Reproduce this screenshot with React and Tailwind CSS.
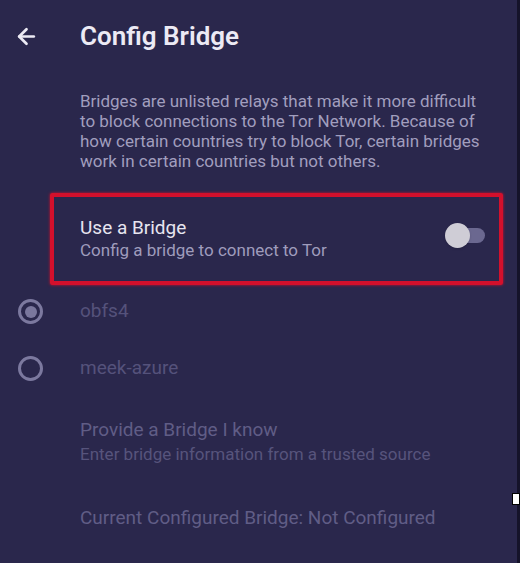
import { ArrowLeft } from 'lucide-react';

function Radio({ checked, label }) {
  return (
    <div className="flex items-center h-[57px]">
      <div className="w-[80px] pl-[18px]">
        <div className="w-[25px] h-[25px] rounded-full border-[3px] border-[#7c799f] flex items-center justify-center">
          {checked && <div className="w-[12px] h-[12px] rounded-full bg-[#7a779d]" />}
        </div>
      </div>
      <span className="text-[19px] text-[#55527b]">{label}</span>
    </div>
  );
}

export default function App() {
  return (
    <div
      className="relative w-[520px] h-[563px] overflow-hidden bg-[#2a274c]"
      style={{ fontFamily: 'Roboto, "Noto Sans", sans-serif' }}
    >
      {/* Toolbar */}
      <div className="flex items-center h-[72px]">
        <div className="w-[80px] pl-[14px]">
          <ArrowLeft size={25} strokeWidth={2.6} className="text-[#eceaf4]" />
        </div>
        <h1 className="text-[26px] font-semibold text-[#eceaf4]">Config Bridge</h1>
      </div>

      {/* Description */}
      <p className="pl-[80px] pr-[30px] pt-[19px] text-[17px] leading-[20px] text-[#a19ebe]">
        Bridges are unlisted relays that make it more difficult to block connections to the Tor Network. Because of how certain countries try to block Tor, certain bridges work in certain countries but not others.
      </p>

      {/* Use a Bridge */}
      <div className="mt-[22px] ml-[50px] mr-[17px] h-[92px] border-[4px] border-[#d3102c] rounded-[2px] shadow-[0_0_3px_#d3102c] flex items-center pl-[26px] pr-[14px]">
        <div className="flex-1">
          <div className="text-[19px] leading-[22px] text-[#e7e5f0]">Use a Bridge</div>
          <div className="text-[17px] leading-[22px] text-[#9f9cbc]">Config a bridge to connect to Tor</div>
        </div>
        <div className="relative w-[40px] h-[25px] mt-[-8px] flex items-center">
          <div className="absolute left-[11px] w-[29px] h-[15px] rounded-full bg-[#6b6890]" />
          <div className="absolute left-0 w-[25px] h-[25px] rounded-full bg-[#cfcdd6] shadow" />
        </div>
      </div>

      {/* Radios */}
      <div className="mt-[-2px]">
        <Radio checked label="obfs4" />
        <Radio label="meek-azure" />
      </div>

      {/* Provide a bridge */}
      <div className="pl-[80px] pt-[21px]">
        <div className="text-[19px] leading-[24px] text-[#605d86]">Provide a Bridge I know</div>
        <div className="text-[17px] leading-[24px] text-[#57547c]">Enter bridge information from a trusted source</div>
      </div>

      <div className="pl-[80px] pt-[40px] text-[19px] leading-[24px] text-[#605d86]">
        Current Configured Bridge: Not Configured
      </div>

      {/* right edge artifacts */}
      <div className="absolute top-0 right-0 w-[3px] h-full bg-[#15132a]" />
      <div className="absolute right-0 top-[493px] w-[8px] h-[12px] bg-white border border-black" />
    </div>
  );
}
